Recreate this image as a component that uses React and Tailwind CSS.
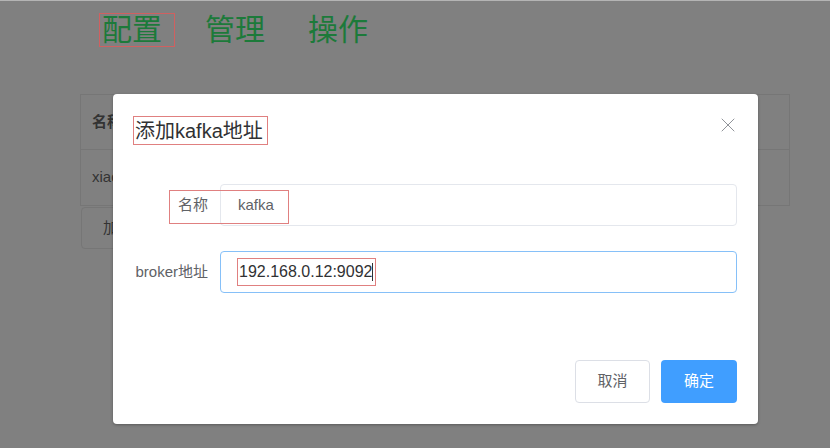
import { X } from 'lucide-react';

const cjk = { fontFamily: '"Liberation Sans", "Noto Sans CJK SC", sans-serif' };

export default function App() {
    return (
        <div className="relative w-[830px] h-[448px] overflow-hidden bg-[#808080]" style={cjk}>
            <div className="h-px bg-[#b4b4b4]" />

            {/* Page behind the dimmed overlay */}
            <nav className="flex items-center pt-[13px] pl-[100px] text-[30px] leading-none text-[#1c7a3a]">
                <span className="inline-flex items-center h-[32px] outline outline-1 outline-[#d06060] pl-[2px] pr-[12px]">配置</span>
                <span className="ml-[31px]">管理</span>
                <span className="ml-[43px]">操作</span>
            </nav>

            <div className="ml-[80px] mt-[48px] w-[710px]">
                <div className="border border-[#767676]">
                    <div className="h-[55px] flex items-center px-[11px] border-b border-[#767676] text-[15px] font-bold text-[#333]">名称</div>
                    <div className="h-[55px] flex items-center px-[11px] text-[15px] text-[#333]">xiaoming</div>
                </div>
                <div className="mt-[1px] ml-px w-[100px] h-[42px] flex items-center pl-[21px] border border-[#767676] rounded-[4px] text-[15px] text-[#333]">加入</div>
            </div>

            {/* Dialog */}
            <div className="absolute left-[113px] top-[94px] w-[645px] h-[330px] bg-white rounded-[4px] shadow-[0_1px_3px_rgba(0,0,0,0.3)] flex flex-col">
                <div className="relative pt-[22px] pl-[20px] pr-[20px]">
                    <div className="inline-flex items-center h-[29px] border border-[#e08080] pl-px pr-[4px] text-[20px] text-[#303133]">添加kafka地址</div>
                    <X className="absolute right-[18px] top-[19px] w-[24px] h-[24px] text-[#909399]" strokeWidth={1} />
                </div>

                <div className="mt-[39px] flex flex-col gap-[25px] pr-[21px]">
                    <div className="relative flex items-center">
                        <label className="w-[107px] pr-[12px] text-right text-[15px] text-[#606266]">名称</label>
                        <div className="flex-1 h-[42px] flex items-center px-[17px] border border-[#e4e7ed] rounded-[4px] text-[15px] text-[#606266]">kafka</div>
                        <div className="absolute left-[56px] top-[6px] w-[120px] h-[34px] border border-[#e08080]" />
                    </div>
                    <div className="flex items-center">
                        <label className="w-[107px] pr-[12px] text-right text-[15px] text-[#606266]">broker地址</label>
                        <div className="flex-1 h-[42px] flex items-center px-[16px] border border-[#86c0f8] rounded-[4px]">
                            <div className="h-[28px] flex items-center pl-[1px] pr-[2px] border border-[#e08080] text-[16px] text-[#303133]">
                                192.168.0.12:9092<span className="w-px h-[18px] bg-[#303133]" />
                            </div>
                        </div>
                    </div>
                </div>

                <div className="mt-auto mb-[21px] mr-[21px] flex justify-end gap-[11px]">
                    <button className="w-[75px] h-[43px] border border-[#dcdfe6] rounded-[4px] text-[15px] text-[#606266] bg-white">取消</button>
                    <button className="w-[76px] h-[43px] rounded-[4px] text-[15px] text-white bg-[#409eff]">确定</button>
                </div>
            </div>
        </div>
    );
}
